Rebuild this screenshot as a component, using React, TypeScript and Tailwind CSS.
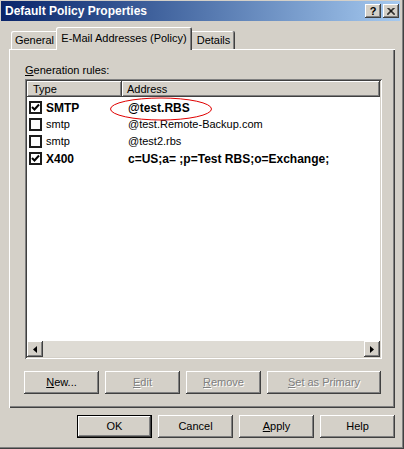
import React from 'react';

const raised =
  'shadow-[inset_-1px_-1px_#404040,inset_1px_1px_#ffffff,inset_-2px_-2px_#808080,inset_2px_2px_#d4d0c8]';
const sunken =
  'shadow-[inset_1px_1px_#808080,inset_-1px_-1px_#ffffff,inset_2px_2px_#404040,inset_-2px_-2px_#d4d0c8]';

const U = ({ children }: { children: React.ReactNode }) => <span className="underline underline-offset-[1px]">{children}</span>;

const CheckBox = ({ checked }: { checked: boolean }) => (
  <div className="w-[13px] h-[13px] bg-white border-2 border-[#1c1c1c] flex items-center justify-center shrink-0">
    {checked && (
      <svg width="9" height="9" viewBox="0 0 9 9">
        <path d="M1 4 L3.5 6.5 L8 1.5" fill="none" stroke="#000" strokeWidth="2" />
      </svg>
    )}
  </div>
);

const rows = [
  { checked: true, type: 'SMTP', address: '@test.RBS', bold: true },
  { checked: false, type: 'smtp', address: '@test.Remote-Backup.com', bold: false },
  { checked: false, type: 'smtp', address: '@test2.rbs', bold: false },
  { checked: true, type: 'X400', address: 'c=US;a= ;p=Test RBS;o=Exchange;', bold: true },
];

const PanelButton = ({ w, disabled, children }: { w: string; disabled?: boolean; children: React.ReactNode }) => (
  <div
    className={`${w} h-[23px] flex items-center justify-center bg-[#d4d0c8] ${raised} ${
      disabled ? 'text-[#808080] [text-shadow:1px_1px_0_#ffffff]' : 'text-black'
    }`}
  >
    {children}
  </div>
);

const App = () => {
  return (
    <div className="w-[404px] h-[449px] bg-[#d4d0c8] font-['Liberation_Sans',Arial,sans-serif] text-[11px] text-black flex flex-col shadow-[inset_-1px_-1px_#404040,inset_-2px_-2px_#808080] overflow-hidden">
      {/* title bar */}
      <div className="ml-px mr-[4px] mt-px h-[20px] bg-linear-to-r from-[#0a246a] to-[#a6caf0] flex items-center pl-[4px] pr-px">
        <span className="text-white font-bold text-[12px] leading-none">Default Policy Properties</span>
        <div className="ml-auto flex gap-[2px]">
          <div className={`w-[16px] h-[14px] bg-[#d4d0c8] ${raised} flex items-center justify-center font-bold text-[11px] leading-none`}>?</div>
          <div className={`w-[16px] h-[14px] bg-[#d4d0c8] ${raised} flex items-center justify-center`}>
            <svg width="8" height="7" viewBox="0 0 8 7">
              <path d="M0.5 0 L7.5 7 M1.5 0 L8 6.5 M7.5 0 L0.5 7 M6.5 0 L0 6.5" stroke="#000" strokeWidth="1" />
            </svg>
          </div>
        </div>
      </div>

      <div className="flex flex-col px-[9px]">
        {/* tabs */}
        <div className="mt-[6px] h-[22px] flex items-end">
          <div className="ml-[2px] w-[47px] h-[18px] flex items-center justify-center rounded-t-[2px] shadow-[inset_1px_1px_#ffffff,inset_-1px_0_#404040,inset_-2px_0_#808080]">
            General
          </div>
          <div className="relative z-10 -ml-[2px] -mb-px w-[136px] h-[23px] bg-[#d4d0c8] flex items-center justify-center pb-px rounded-t-[2px] shadow-[inset_1px_1px_#ffffff,inset_-1px_0_#404040,inset_-2px_0_#808080]">
            E-Mail Addresses (Policy)
          </div>
          <div className="-ml-[2px] w-[45px] h-[18px] flex items-center justify-center pl-[2px] rounded-t-[2px] shadow-[inset_-1px_0_#404040,inset_0_1px_#ffffff,inset_-2px_0_#808080]">
            Details
          </div>
        </div>

        {/* panel */}
        <div className="h-[359px] flex flex-col pl-[16px] pr-[13px] shadow-[inset_1px_1px_#ffffff,inset_-1px_-1px_#404040,inset_-2px_-2px_#808080]">
          <div className="mt-[15px] h-[13px] leading-[13px]">
            <U>G</U>eneration rules:
          </div>
          <div className={`relative mt-[2px] h-[280px] bg-white p-[2px] flex flex-col ${sunken}`}>
            {/* header */}
            <div className="h-[16px] flex bg-[#d4d0c8] shrink-0">
              <div className={`w-[95px] h-full flex items-center pl-[6px] ${raised}`}>Type</div>
              <div className={`flex-1 h-full flex items-center pl-[5px] ${raised}`}>Address</div>
            </div>
            {/* rows */}
            <div className="flex-1 pt-[2px]">
              {rows.map((r, i) => (
                <div key={i} className="h-[17px] flex items-center">
                  <div className="w-[96px] flex items-center pl-[2px]">
                    <CheckBox checked={r.checked} />
                    <span className={`ml-[4px] ${r.bold ? 'font-bold text-[12px]' : ''}`}>{r.type}</span>
                  </div>
                  <span className={`ml-[5px] ${r.bold ? 'font-bold text-[12px]' : ''}`}>{r.address}</span>
                </div>
              ))}
            </div>
            {/* horizontal scrollbar */}
            <div className="h-[16px] flex shrink-0 bg-[#dedbd4]">
              <div className={`w-[16px] h-full bg-[#d4d0c8] flex items-center justify-center ${raised}`}>
                <svg width="4" height="7" viewBox="0 0 4 7">
                  <path d="M4 0 L0 3.5 L4 7 Z" fill="#000" />
                </svg>
              </div>
              <div className="flex-1" />
              <div className={`w-[16px] h-full bg-[#d4d0c8] flex items-center justify-center ${raised}`}>
                <svg width="4" height="7" viewBox="0 0 4 7">
                  <path d="M0 0 L4 3.5 L0 7 Z" fill="#000" />
                </svg>
              </div>
            </div>
            {/* annotation ellipse over the first address */}
            <svg className="absolute left-[84px] top-[17px] pointer-events-none" width="104" height="26" viewBox="0 0 104 26">
              <ellipse cx="52" cy="13" rx="50.5" ry="11" fill="none" stroke="#e00000" strokeWidth="1" />
            </svg>
          </div>

          {/* panel buttons */}
          <div className="mt-[12px] flex gap-[6px] -ml-px">
            <PanelButton w="w-[75px]">
              <span><U>N</U>ew...</span>
            </PanelButton>
            <PanelButton w="w-[75px]" disabled>
              <span><U>E</U>dit</span>
            </PanelButton>
            <PanelButton w="w-[75px]" disabled>
              <span><U>R</U>emove</span>
            </PanelButton>
            <PanelButton w="w-[114px]" disabled>
              <span><U>S</U>et as Primary</span>
            </PanelButton>
          </div>
        </div>

        {/* dialog buttons */}
        <div className="mt-[7px] flex justify-end gap-[6px]">
          <div className="w-[75px] h-[23px] border border-black flex">
            <div className={`flex-1 flex items-center justify-center ${raised}`}>OK</div>
          </div>
          <PanelButton w="w-[75px]">Cancel</PanelButton>
          <PanelButton w="w-[75px]">
            <span><U>A</U>pply</span>
          </PanelButton>
          <PanelButton w="w-[75px]">Help</PanelButton>
        </div>
      </div>
    </div>
  );
};

export default App;
